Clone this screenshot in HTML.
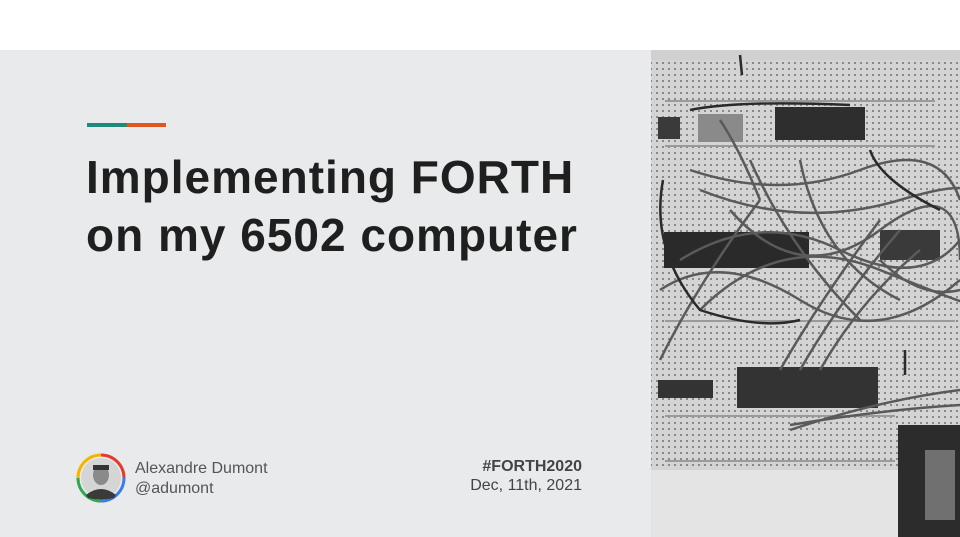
<!DOCTYPE html>
<html><head><style>
body{margin:0;width:960px;height:537px;overflow:hidden;background:#fff;font-family:"Liberation Sans",sans-serif;position:relative}
#left{position:absolute;left:0;top:50px;width:651px;height:487px;background:#e8eaeb}
.bar{position:absolute;top:123px;height:4px}
h1{position:absolute;left:86px;top:148px;margin:0;font-size:46px;line-height:58px;font-weight:bold;color:#1f1f1f;letter-spacing:1px}
.name{position:absolute;left:135px;top:459px;font-size:16px;line-height:20px;color:#555}
.ev{position:absolute;right:378px;top:457px;font-size:16px;line-height:19px;color:#444;text-align:right}
</style></head><body>
<div id="left"></div>
<div class="bar" style="left:87px;width:40px;background:#1e8a7a"></div>
<div class="bar" style="left:127px;width:39px;background:#e0561e"></div>
<h1>Implementing FORTH<br>on my 6502 computer</h1>
<svg style="position:absolute;left:76px;top:453px" width="50" height="50" viewBox="0 0 50 50">
<path d="M25 2 A23 23 0 0 1 48 25" stroke="#e33b2e" stroke-width="3" fill="none"/>
<path d="M48 25 A23 23 0 0 1 25 48" stroke="#3c7de8" stroke-width="3" fill="none"/>
<path d="M25 48 A23 23 0 0 1 2 25" stroke="#2fa84f" stroke-width="3" fill="none"/>
<path d="M2 25 A23 23 0 0 1 25 2" stroke="#f5b400" stroke-width="3" fill="none"/>
<circle cx="25" cy="25" r="20" fill="#d5d5d5"/>
<ellipse cx="25" cy="22" rx="8" ry="10" fill="#8a8a8a"/>
<path d="M10 42 Q25 30 40 42 L38 45 Q25 48 12 45Z" fill="#3a3a3a"/>
<rect x="17" y="12" width="16" height="5" fill="#333"/>
</svg>
<div class="name">Alexandre Dumont<br>@adumont</div>
<div class="ev"><b>#FORTH2020</b><br>Dec, 11th, 2021</div>
<svg style="position:absolute;left:651px;top:50px" width="309" height="487" viewBox="651 50 309 487">
<defs><pattern id="d" width="6" height="6" patternUnits="userSpaceOnUse"><rect width="6" height="6" fill="#d4d4d4"/><rect x="2" y="2" width="2" height="2" fill="#888"/></pattern></defs>
<rect x="651" y="50" width="309" height="487" fill="#d0d0d0"/>
<rect x="651" y="60" width="309" height="410" fill="url(#d)"/>
<rect x="651" y="470" width="309" height="67" fill="#e4e4e4"/>
<g fill="#9a9a9a">
<rect x="665" y="100" width="270" height="2"/><rect x="665" y="145" width="270" height="2"/>
<rect x="665" y="320" width="290" height="2"/><rect x="665" y="415" width="230" height="2"/>
<rect x="665" y="460" width="230" height="2"/>
</g>
<rect x="775" y="107" width="90" height="33" fill="#2e2e2e"/>
<rect x="658" y="117" width="22" height="22" fill="#3a3a3a"/>
<rect x="698" y="114" width="45" height="28" fill="#8a8a8a"/>
<rect x="664" y="232" width="145" height="36" fill="#2a2a2a"/>
<rect x="880" y="230" width="60" height="30" fill="#3a3a3a"/>
<rect x="737" y="367" width="141" height="41" fill="#333"/>
<rect x="658" y="380" width="55" height="18" fill="#333"/>
<rect x="898" y="425" width="62" height="112" fill="#2c2c2c"/>
<rect x="925" y="450" width="30" height="70" fill="#707070"/>
<g fill="none" stroke="#5a5a5a" stroke-width="2.5">
<path d="M690 170 Q780 200 860 170 T960 200"/>
<path d="M700 190 Q800 230 900 200 T960 215"/>
<path d="M680 260 Q760 210 840 250 T960 240"/>
<path d="M660 290 Q720 250 800 300 T960 280"/>
<path d="M700 310 Q780 230 880 270 T960 300"/>
<path d="M730 210 Q800 290 880 230 T960 260"/>
<path d="M750 160 Q790 250 860 320"/>
<path d="M800 160 Q820 260 900 300"/>
<path d="M780 370 Q820 300 880 220"/>
<path d="M800 370 Q840 300 900 230"/>
<path d="M820 370 Q860 300 920 250"/>
<path d="M660 360 Q700 280 760 200"/>
<path d="M720 120 Q740 150 760 200"/>
<path d="M880 260 Q920 300 960 290"/>
<path d="M790 430 Q880 400 960 390"/>
<path d="M790 425 Q880 410 960 405"/>
</g>
<g fill="none" stroke="#2a2a2a" stroke-width="2.5">
<path d="M690 110 Q740 100 850 105"/>
<path d="M870 150 Q880 180 940 210"/>
<path d="M663 180 Q650 250 700 310 Q760 330 800 320"/>
<path d="M740 55 L742 75"/><path d="M905 350 L905 375"/>
</g>
</svg>
</body></html>
